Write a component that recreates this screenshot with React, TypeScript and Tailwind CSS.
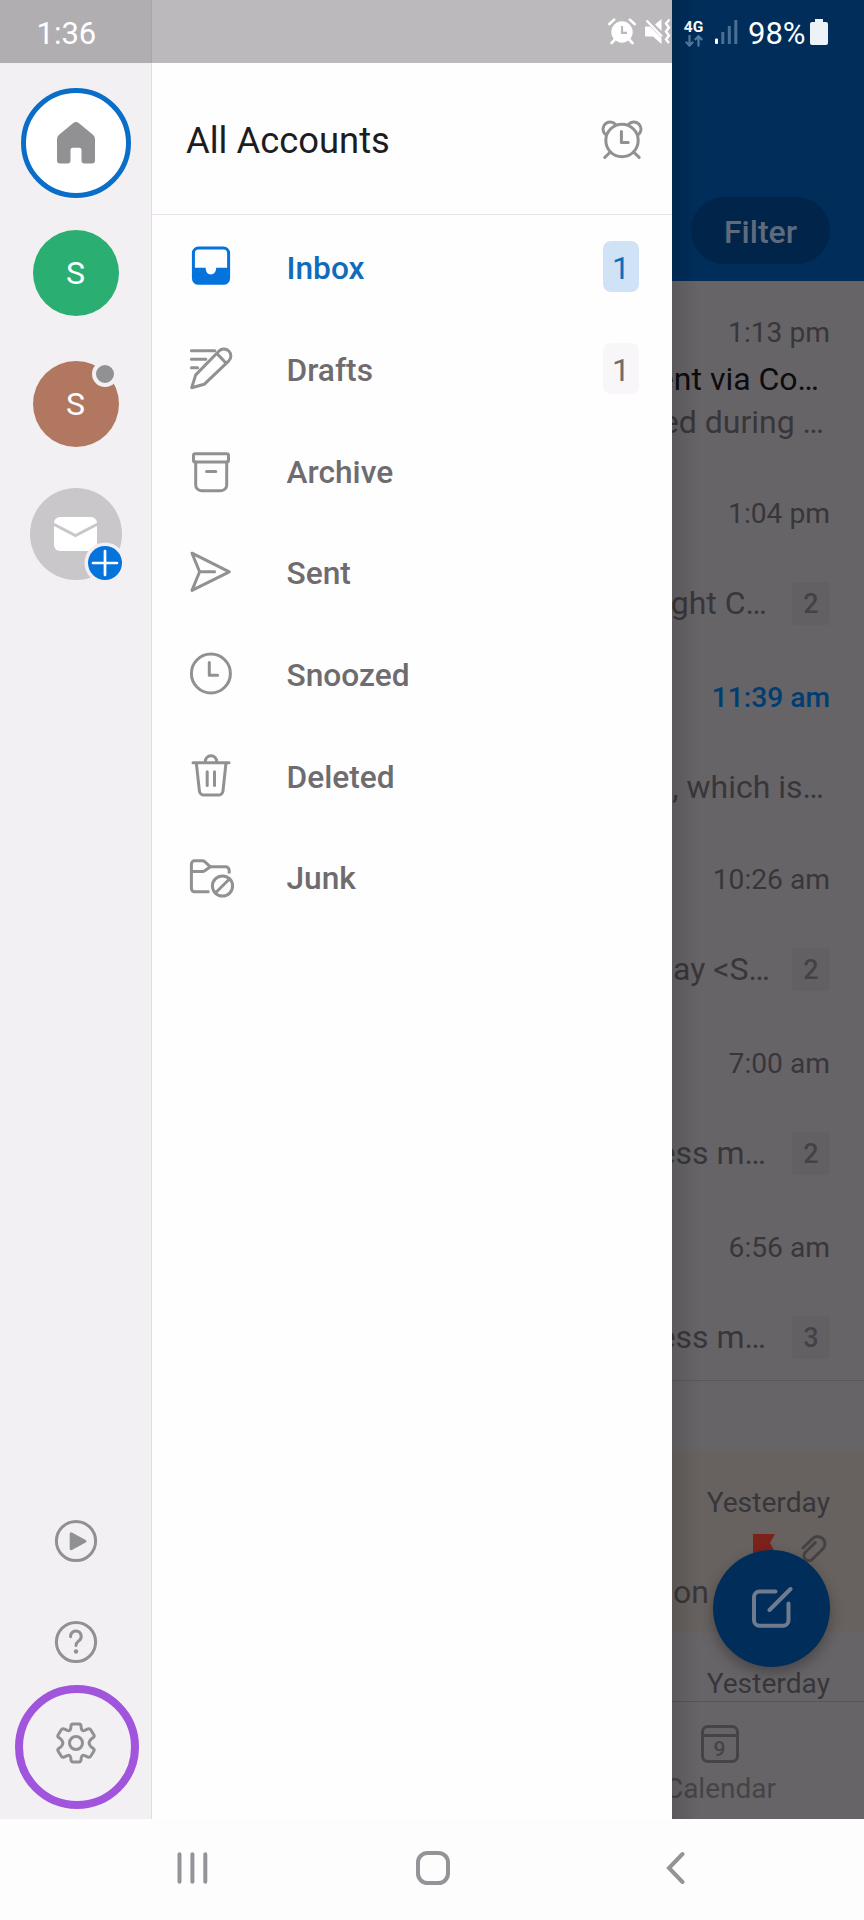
import { ReactNode } from "react";

const Icon = ({ children, className = "" }: { children: ReactNode; className?: string }) => (
    <svg
        viewBox="0 0 48 48"
        className={`w-12 h-12 shrink-0 overflow-visible ${className}`}
        fill="none"
        stroke="currentColor"
        strokeWidth={3}
        strokeLinecap="round"
        strokeLinejoin="round"
    >
        {children}
    </svg>
);

const folders: { name: string; count?: number; active?: boolean; icon: ReactNode }[] = [
    {
        name: "Inbox", count: 1, active: true,
        icon: (
            <>
                <rect x="6.4" y="6.1" width="35.2" height="35.2" rx="5" />
                <path d="M6.4 25.7H18.6C18.8 30.2 20.8 32.4 23.8 32.4S29 30.2 29.2 25.7H41.6V36.3A5 5 0 0 1 36.6 41.3H11.4A5 5 0 0 1 6.4 36.3Z" fill="currentColor" stroke="none" />
            </>
        ),
    },
    {
        name: "Drafts", count: 1,
        icon: (
            <>
                <path d="M4.4 6.7H27.8M4.4 15.2H18.8M4.4 23.7H10.6" />
                <path d="M4.7 43.7L8.7 30.9L32 7A6.8 6.8 0 0 1 41.8 16.8L17.2 40.3ZM30 9.6L38.2 18.2" />
            </>
        ),
    },
    {
        name: "Archive",
        icon: (
            <>
                <rect x="6.5" y="7.7" width="35" height="8.3" rx="1.8" />
                <path d="M8.7 16V38.9A5.8 5.8 0 0 0 14.5 44.7H33.9A5.8 5.8 0 0 0 39.7 38.9V16M19.6 25.5H28.8" />
            </>
        ),
    },
    {
        name: "Sent",
        icon: <path d="M5 6.2L42.3 24.8L5 43.4L12.6 24.8ZM12.6 24.8H27.6" />,
    },
    {
        name: "Snoozed",
        icon: (
            <>
                <circle cx="23.9" cy="24.5" r="19.5" />
                <path d="M22.3 13.6V26.3H30.6" />
            </>
        ),
    },
    {
        name: "Deleted",
        icon: (
            <path d="M6 11.8H42M18.2 11.8V10.6A5.8 5.8 0 0 1 29.8 10.6V11.8M9.3 11.8L12.4 39.8A4.6 4.6 0 0 0 17 44H31.4A4.6 4.6 0 0 0 36 39.8L39 11.8M20.2 20.8V34.6M27.5 20.8V34.6" />
        ),
    },
    {
        name: "Junk",
        icon: (
            <>
                <path d="M22.4 39.8H7.6A3.2 3.2 0 0 1 4.4 36.6V12A3.2 3.2 0 0 1 7.6 8.8H15.2Q16.8 8.8 18 9.9L23.4 14.8H38.6A3.6 3.6 0 0 1 42.2 18.4V21.6" strokeLinecap="butt" />
                <path d="M4.4 19.5H15.2Q16.8 19.5 18 18.6L23.4 14.8" />
                <circle cx="35.5" cy="34" r="10.1" />
                <path d="M28.6 40.8L42.2 27.2" />
            </>
        ),
    },
];

const mails: { time: string; height: string; unread?: boolean; subject?: string; preview: string; count?: number; pad?: string }[] = [
    { time: "1:13 pm", height: "h-[181px]", subject: "ent via Co…", preview: "ed during …", pad: "pr-[6px]" },
    { time: "1:04 pm", height: "h-[184px]", preview: "ght C…", count: 2, pad: "pr-[25px]" },
    { time: "11:39 am", height: "h-[182px]", unread: true, preview: ", which is…", pad: "pr-[6px]" },
    { time: "10:26 am", height: "h-[184px]", preview: "ay <S…", count: 2, pad: "pr-[22px]" },
    { time: "7:00 am", height: "h-[184px]", preview: "ess m…", count: 2, pad: "pr-[26px]" },
    { time: "6:56 am", height: "h-[184px]", preview: "ess m…", count: 3, pad: "pr-[26px]" },
];

function Rail() {
    return (
        <div className="w-[152px] shrink-0 flex flex-col items-center bg-[#f2f0f3] border-r border-[#e0dee2]">
            <div className="w-[152px] h-[63px] shrink-0 bg-[#b0aeb1] border-r border-[#a9a7aa] pl-[37px] pt-[10px] text-[31px] leading-[48px] text-white">
                1:36
            </div>
            <div className="mt-[25px] w-[110px] h-[110px] rounded-full border-[5px] border-[#0a6ec9] bg-white flex items-center justify-center">
                <svg viewBox="0 0 38 42" className="w-[38px] h-[42px] mt-[-1px]" fill="#919093">
                    <path d="M16 1.2Q19-1.2 22 1.2L36 12.8Q38 14.5 38 17V38.5Q38 41.5 35 41.5H27.5Q24.5 41.5 24.5 38.5V28Q24.5 25.8 22.3 25.8H15.7Q13.5 25.8 13.5 28V38.5Q13.5 41.5 10.5 41.5H3Q0 41.5 0 38.5V17Q0 14.5 2 12.8Z" />
                </svg>
            </div>
            <div className="mt-8 w-[86px] h-[86px] rounded-full bg-[#2bae71] flex items-center justify-center text-[32px] text-white">S</div>
            <div className="relative mt-[45px] w-[86px] h-[86px] rounded-full bg-[#b27761] flex items-center justify-center text-[32px] text-white">
                S
                <span className="absolute left-[59px] top-0 w-[26px] h-[26px] rounded-full border-4 border-[#f2f0f3] bg-[#919093]" />
            </div>
            <div className="relative mt-[41px] w-[92px] h-[92px] rounded-full bg-[#c9c7ca] flex items-center justify-center">
                <svg viewBox="0 0 43 34" className="w-[43px] h-[34px]">
                    <rect width="43" height="34" rx="6" fill="#fff" />
                    <path d="M-1 6.8L21.5 18.6L44 6.8" fill="none" stroke="#c9c7ca" strokeWidth="3" />
                </svg>
                <svg viewBox="0 0 42 42" className="absolute left-[54px] top-[54px] w-[42px] h-[42px]">
                    <circle cx="21" cy="21" r="20.5" fill="#f2f0f3" />
                    <circle cx="21" cy="21" r="17" fill="#0573dc" />
                    <path d="M21 9V33M9 21H33" stroke="#fff" strokeWidth="2.7" strokeLinecap="round" />
                </svg>
            </div>
            <div className="mt-auto h-[302px] flex flex-col items-center text-[#919093]">
                <Icon>
                    <circle cx="24" cy="24" r="19.6" />
                    <path d="M19.2 16.9V31.7L33 24.3Z" fill="currentColor" />
                </Icon>
                <Icon className="mt-[53px]">
                    <circle cx="24" cy="24" r="19.6" />
                    <path d="M18.6 18.7A5.3 5.3 0 1 1 27.4 22.3C25.4 24.1 24 25 24 27.4" />
                    <circle cx="24" cy="33.5" r="2.2" fill="currentColor" stroke="none" />
                </Icon>
                <div className="relative mt-[53px]">
                    <Icon>
                        <circle cx="24" cy="24" r="6.5" />
                        <path d="M20.9 5.1H27.1Q28.8 5.1 29 6.9L29.3 9.6Q29.8 12.5 32.7 11.4L36 9.9Q37.8 9.3 38.7 10.8L41.8 15.8Q42.8 17.4 41.3 18.5L38.8 20.4Q35.5 24 38.8 27.6L41.3 29.5Q42.8 30.6 41.8 32.2L38.7 37.2Q37.8 38.7 36 38.1L32.7 36.6Q29.8 35.5 29.3 38.4L29 41.1Q28.8 42.9 27.1 42.9H20.9Q19.2 42.9 19 41.1L18.7 38.4Q18.2 35.5 15.3 36.6L12 38.1Q10.2 38.7 9.3 37.2L6.2 32.2Q5.2 30.6 6.7 29.5L9.2 27.6Q12.5 24 9.2 20.4L6.7 18.5Q5.2 17.4 6.2 15.8L9.3 10.8Q10.2 9.3 12 9.9L15.3 11.4Q18.2 12.5 18.7 9.6L19 6.9Q19.2 5.1 20.9 5.1Z" />
                    </Icon>
                    <span className="absolute -left-[37px] -top-[34px] w-[124px] h-[124px] rounded-full border-8 border-[#a055dc]" />
                </div>
            </div>
        </div>
    );
}

function Drawer() {
    return (
        <div className="w-[520px] shrink-0 flex flex-col bg-[#fefefe]">
            <div className="h-[63px] shrink-0 bg-[#bcb9bc] flex justify-end items-start pt-[18px] text-white">
                <svg viewBox="0 0 28 27" className="w-7 h-[27px] mr-[9px]" fill="currentColor">
                    <circle cx="14" cy="14" r="10.7" />
                    <path d="M1.4 6L6.2 1.6M26.6 6L21.8 1.6M6.4 22L3.6 25M21.6 22L24.4 25" stroke="currentColor" strokeWidth="2.6" strokeLinecap="round" />
                    <path d="M14 8V14.8H19" fill="none" stroke="#bcb9bc" strokeWidth="2.2" />
                </svg>
                <svg viewBox="0 0 27 27" className="w-[27px] h-[27px]" fill="currentColor">
                    <path d="M0 9.5Q0 8.5 1 8.5H5L16.5 20V26L8 18.5H1Q0 18.5 0 17.5ZM10 6.5L16.5 1V13Z" />
                    <path d="M1.5 2.5L17 18.5" stroke="currentColor" strokeWidth="2.4" />
                    <path d="M24.5 1.5L21 5.5L24 9.5L21 13.5L24 17.5L21 21.5L24 25" fill="none" stroke="currentColor" strokeWidth="2.4" />
                </svg>
            </div>
            <div className="h-[152px] shrink-0 border-b border-[#e4e2e5] flex items-center justify-between pl-[34px] pr-[26.5px]">
                <h1 className="text-[36.4px] leading-[44px] text-[#1d1c1f] mt-[4px]">All Accounts</h1>
                <Icon className="text-[#919093] mt-[2px]">
                    <circle cx="24" cy="24.5" r="16.2" />
                    <path d="M23.4 15.4V26.4H30.2M6.8 41.4L12.4 36M41.2 41.4L35.6 36" />
                    <path d="M6.9 18A6.8 6.8 0 1 1 17.4 8.3M41.1 18A6.8 6.8 0 1 0 30.6 8.3" />
                </Icon>
            </div>
            {folders.map((f) => (
                <div key={f.name} className={`h-[101.7px] shrink-0 flex items-center pl-[35px] pr-[33px] ${f.active ? "text-[#0573dc]" : "text-[#919093]"}`}>
                    <Icon className="mt-px">{f.icon}</Icon>
                    <span className={`ml-[51.5px] mt-[7px] text-[31.7px] leading-10 font-medium ${f.active ? "text-[#0f6cbd]" : "text-[#6e6c6f]"}`}>
                        {f.name}
                    </span>
                    {f.count && (
                        <span className={`ml-auto mt-[2px] w-9 h-[51px] rounded-lg text-center text-[32px] leading-[54px] ${f.active ? "bg-[#cfe2f6] text-[#0f6cbd]" : "bg-[#f8f6f9] text-[#6e6c6f]"}`}>
                            {f.count}
                        </span>
                    )}
                </div>
            ))}
        </div>
    );
}

function MailList() {
    return (
        <div className="relative w-[192px] shrink-0 flex flex-col overflow-hidden bg-[#676468]">
            <div className="h-[281px] shrink-0 bg-[#002d5a] flex flex-col">
                <div className="h-[63px] flex items-start pl-3 pt-[18px] text-white">
                    <div className="w-[19px] pt-px flex flex-col items-center">
                        <span className="text-[15.5px] leading-4 font-bold">4G</span>
                        <svg viewBox="0 0 18 12" className="w-[18px] h-3" fill="none" stroke="#557a9e" strokeWidth="2.2">
                            <path d="M4.5 0V10.5M.8 6.8L4.5 10.6L8.2 6.8M13.5 11.5V1.2M9.8 5L13.5 1.2L17.2 5" />
                        </svg>
                    </div>
                    <svg viewBox="0 0 23 24" className="w-[23px] h-6 ml-3 mt-[2px]" fill="#4a6f95">
                        <rect y="18.5" width="3" height="5.5" rx="1" fill="#fff" />
                        <rect x="6.3" y="12" width="3" height="12" />
                        <rect x="12.8" y="6" width="3" height="18" />
                        <rect x="19.3" y="0" width="3" height="24" />
                    </svg>
                    <span className="ml-[10px] -mt-2 w-[62px] text-[31px] leading-[48px]">98%</span>
                    <svg viewBox="0 0 18 26" className="w-[18px] h-[26px] mt-px" fill="#edf1f8">
                        <path d="M5 0H13V3H16Q18 3 18 5V24Q18 26 16 26H2Q0 26 0 24V5Q0 3 2 3H5Z" />
                    </svg>
                </div>
                <div className="ml-[19px] mt-[134px] w-[139px] h-[67px] rounded-full bg-[#00244a] text-center text-[32px] leading-[71px] font-medium text-[#5f6a7c]">
                    Filter
                </div>
            </div>
            {mails.map((m, i) => (
                <div key={i} className={`${m.height} shrink-0 pt-[34px] pr-[34px] flex flex-col items-end whitespace-nowrap text-[#38363a]`}>
                    <span className={`text-[28.2px] leading-9 ${m.unread ? "font-medium text-[#003d73]" : ""}`}>{m.time}</span>
                    <span className="mt-[6px] h-11 pr-[11px] text-[32px] leading-[44px] text-[#0c0b0d]">{m.subject}</span>
                    <div className="flex items-start">
                        <span className={`text-[32px] leading-[42px] ${m.pad}`}>{m.preview}</span>
                        {m.count && (
                            <span className="w-[38px] h-[43px] rounded bg-[#636064] text-center text-[27px] leading-[44px] font-medium text-[#444246]">{m.count}</span>
                        )}
                    </div>
                </div>
            ))}
            <div className="h-[71px] shrink-0 border-t border-[#5a575b]" />
            <div className="h-[181px] shrink-0 bg-[#67625f] pt-[34px] pr-[34px] flex flex-col items-end whitespace-nowrap text-[#38363a]">
                <span className="text-[28.2px] leading-9">Yesterday</span>
                <div className="mt-[13px] h-[37px] flex items-start gap-[26px]">
                    <svg viewBox="0 0 22 26" className="w-[22px] h-[26px]" fill="#7d211b">
                        <path d="M0 0H22L17 9L22 18H2V26H0Z" />
                    </svg>
                    <svg viewBox="0 0 26 28" className="w-[26px] h-7 mr-[3px]" fill="none" stroke="#454246" strokeWidth="3" strokeLinecap="round">
                        <path d="M2 14L11.5 4.6A7.3 7.3 0 0 1 21.8 15L11.4 25.2A4.9 4.9 0 0 1 4.4 18.2L14.2 8.6" />
                    </svg>
                </div>
                <span className="mr-[121px] text-[32px] leading-[42px]">on</span>
            </div>
            <div className="h-[69px] shrink-0 pt-[34px] pr-[34px] text-right text-[28.2px] leading-9 text-[#38363a]">Yesterday</div>
            <div className="h-[117px] shrink-0 border-t border-[#58555a] flex flex-col items-end text-[#454346]">
                <svg viewBox="0 0 38 38" className="w-[38px] h-[38px] mt-[23px] mr-[125px]" fill="none" stroke="currentColor" strokeWidth="3">
                    <rect x="1.5" y="1.5" width="35" height="35" rx="5.5" />
                    <path d="M1.4 10.4H36.6" />
                    <text x="18.4" y="30.5" textAnchor="middle" fontSize="21" fontWeight="500" fill="currentColor" stroke="none">9</text>
                </svg>
                <span className="mt-[8px] mr-[88px] text-[28px] leading-9">Calendar</span>
            </div>
            {/* compose button */}
            <div className="absolute left-[41px] top-[1550px] w-[117px] h-[117px] rounded-full bg-[#002d5a] shadow-[0_6px_14px_rgba(0,0,0,0.3)] flex items-center justify-center text-[#6f7c90]">
                <svg viewBox="0 0 42 42" className="w-[42px] h-[42px] overflow-visible" fill="none" stroke="currentColor" strokeWidth="4" strokeLinecap="round">
                    <path d="M24.5 3.5H8.5A5.5 5.5 0 0 0 3 9V32.3A5.5 5.5 0 0 0 8.5 37.8H32A5.5 5.5 0 0 0 37.5 32.3V15.5M18.5 22L39.5 1" />
                </svg>
            </div>
            {/* drawer edge shadow */}
            <div className="absolute left-0 top-0 w-7 h-full bg-linear-to-r from-black/12 to-transparent" />
        </div>
    );
}

export default function App() {
    return (
        <div className="w-[864px] h-[1920px] flex flex-col bg-[#fdfdfd] font-['Roboto',sans-serif] overflow-hidden">
            <div className="h-[1819px] shrink-0 flex">
                <Rail />
                <Drawer />
                <MailList />
            </div>
            <div className="h-[101px] flex items-start justify-between pl-[177px] pr-[179px] pt-8 text-[#959397]">
                <svg viewBox="0 0 31 34" className="w-[31px] h-[34px]" stroke="currentColor" strokeWidth="4" strokeLinecap="round">
                    <path d="M2.5 3.3V30.7M15.4 3.3V30.7M28.3 3.3V30.7" />
                </svg>
                <svg viewBox="0 0 34 34" className="w-[34px] h-[34px] -ml-2" fill="none" stroke="currentColor" strokeWidth="4">
                    <rect x="2" y="2" width="30" height="30" rx="9.5" />
                </svg>
                <svg viewBox="0 0 19 34" className="w-[19px] h-[34px]" fill="none" stroke="currentColor" strokeWidth="4" strokeLinecap="round">
                    <path d="M16.5 3L3 17L16.5 31" />
                </svg>
            </div>
        </div>
    );
}
